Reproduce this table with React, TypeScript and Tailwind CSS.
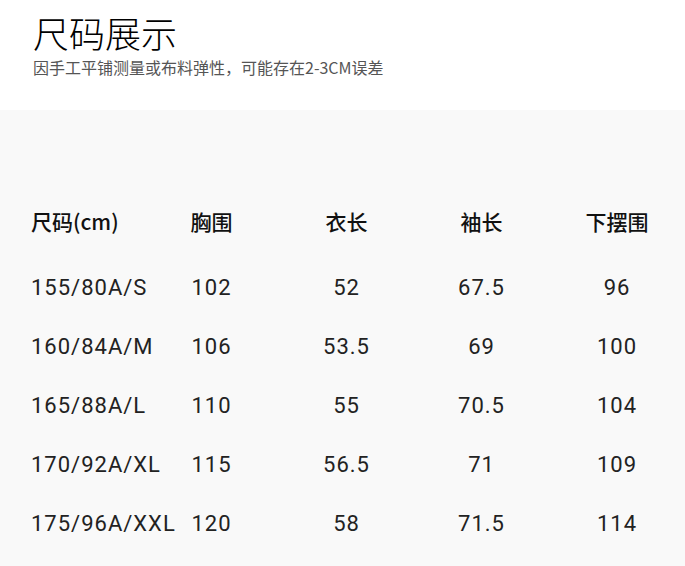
const FONT = {
  fontFamily: '"Noto Sans CJK SC", "Noto Sans", sans-serif',
};

const rows = [
  ["155/80A/S", "102", "52", "67.5", "96"],
  ["160/84A/M", "106", "53.5", "69", "100"],
  ["165/88A/L", "110", "55", "70.5", "104"],
  ["170/92A/XL", "115", "56.5", "71", "109"],
  ["175/96A/XXL", "120", "58", "71.5", "114"],
];

const headers = ["尺码(cm)", "胸围", "衣长", "袖长", "下摆围"];

const cols = "grid grid-cols-[144px_135px_135px_135px_136px] items-center";

export default function App() {
  return (
    <div className="h-[566px] w-[685px] overflow-hidden bg-white" style={FONT}>
      <div className="h-[110px] px-[33px] pt-[8px]">
        <h1 className="text-[36px] font-light leading-[48px] text-black">尺码展示</h1>
        <p className="text-[16px] leading-[22px] text-[#555]">
          因手工平铺测量或布料弹性，可能存在2-3CM误差
        </p>
      </div>
      <div className="h-[456px] bg-[#f9f9f9] pt-[96px]">
        <div className={`${cols} h-[32px] text-[21px] font-medium text-[#111]`}>
          {headers.map((h, i) => (
            <div key={h} className={i === 0 ? "pl-[31px]" : "text-center"}>
              {h}
            </div>
          ))}
        </div>
        <div className="mt-[20px] flex flex-col">
          {rows.map((r) => (
            <div
              key={r[0]}
              className={`${cols} h-[59px] text-[22px] tracking-[1px] text-[#222]`}
              style={{ fontFamily: 'Roboto, "Liberation Sans", sans-serif' }}
            >
              {r.map((c, i) => (
                <div key={i} className={i === 0 ? "pl-[31px]" : "text-center"}>
                  {c}
                </div>
              ))}
            </div>
          ))}
        </div>
      </div>
    </div>
  );
}
